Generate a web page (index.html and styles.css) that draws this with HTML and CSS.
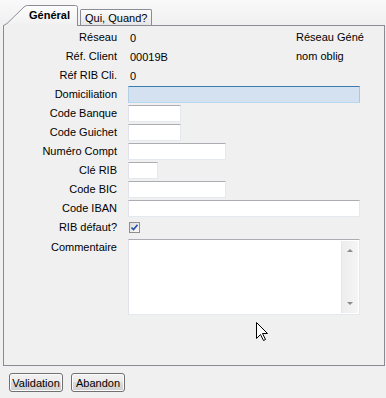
FILE: index.html
```html
<!DOCTYPE html>
<html lang="fr">

<head>
    <meta charset="UTF-8">
    <title>RIB</title>
    <link rel="stylesheet" href="styles.css">
</head>

<body>

    <div class="window">
        <div class="tabs">
            <div class="tab active">
                <svg class="tab-shape" width="75" height="21" viewBox="0 0 75 21">
                    <defs>
                        <linearGradient id="tabfill" x1="0" y1="0" x2="0" y2="1">
                            <stop offset="0" stop-color="#fdfdfd" />
                            <stop offset="1" stop-color="#f0f0f0" />
                        </linearGradient>
                    </defs>
                    <path d="M0.5 21 L0.5 20.5 L4 18.5 L21 2 Q22.5 0.5 24.5 0.5 L72.5 0.5 Q74.5 0.5 74.5 2.5 L74.5 21 Z" fill="url(#tabfill)" />
                    <path d="M0.5 21 L0.5 20.5 L4 18.5 L21 2 Q22.5 0.5 24.5 0.5 L72.5 0.5 Q74.5 0.5 74.5 2.5 L74.5 21" fill="none" stroke="#898c95" />
                </svg>
                <span>Général</span>
            </div>
            <div class="tab">Qui, Quand?</div>
        </div>

        <div class="panel">
            <div class="form">
                <div class="lbl">Réseau</div>
                <div class="fld short"><span class="val">0</span></div>
                <div class="note">Réseau Géné</div>

                <div class="lbl">Réf. Client</div>
                <div class="fld short"><span class="val">00019B</span></div>
                <div class="note">nom oblig</div>

                <div class="lbl">Réf RIB Cli.</div>
                <div class="fld"><span class="val">0</span></div>

                <div class="lbl">Domiciliation</div>
                <div class="fld"><input type="text" class="edit wide focused"></div>

                <div class="lbl">Code Banque</div>
                <div class="fld"><input type="text" class="edit w53"></div>

                <div class="lbl">Code Guichet</div>
                <div class="fld"><input type="text" class="edit w53"></div>

                <div class="lbl">Numéro Compt</div>
                <div class="fld"><input type="text" class="edit w98"></div>

                <div class="lbl">Clé RIB</div>
                <div class="fld"><input type="text" class="edit w30"></div>

                <div class="lbl">Code BIC</div>
                <div class="fld"><input type="text" class="edit w98"></div>

                <div class="lbl">Code IBAN</div>
                <div class="fld"><input type="text" class="edit wide"></div>

                <div class="lbl">RIB défaut?</div>
                <div class="fld">
                    <span class="check">
                        <svg width="7" height="7" viewBox="0 0 7 7">
                            <path d="M0.5 3.5 L2.5 5.5 L6.5 0.8" fill="none" stroke="#2a4fa8" stroke-width="1.6" />
                        </svg>
                    </span>
                </div>

                <div class="lbl top">Commentaire</div>
                <div class="fld top">
                    <div class="memo">
                        <div class="memo-text"></div>
                        <div class="scroll">
                            <span class="arrow up"></span>
                            <span class="arrow down"></span>
                        </div>
                    </div>
                </div>
            </div>
        </div>

        <div class="buttons">
            <button class="btn">Validation</button>
            <button class="btn">Abandon</button>
        </div>

        <svg class="cursor" width="13" height="20" viewBox="0 0 13 20">
            <path d="M0.5 0.5 L0.5 16.5 L4.5 12.5 L7.5 18.5 L9.5 17.5 L6.5 11.5 L11.5 11.5 Z" fill="#fff" stroke="#000" />
        </svg>
    </div>

</body>

</html>
```

FILE: styles.css
```css
body {
    margin: 0;
    background: #f0f0f0;
    font-family: "Liberation Sans", "DejaVu Sans", sans-serif;
    font-size: 11px;
    color: #000;
}

.window {
    position: relative;
    width: 386px;
    height: 398px;
    background: linear-gradient(#f9f9f9 0, #f0f0f0 25px);
}

/* ---------- onglets ---------- */
.tabs {
    display: flex;
    align-items: flex-end;
    height: 25px;
    padding-left: 3px;
    gap: 1px;
}

.tab {
    position: relative;
    box-sizing: border-box;
    height: 16px;
    margin-left: 1px;
    padding: 1px 4px 0 4px;
    border: 1px solid #898c95;
    border-bottom: none;
    border-radius: 2px 2px 0 0;
    background: linear-gradient(#fcfcfc, #e6e6e6);
    line-height: 14px;
}

.tab.active {
    width: 75px;
    height: 21px;
    margin: 0 0 -1px 0;
    padding: 3px 0 0 26px;
    border: none;
    background: none;
    font-weight: bold;
    z-index: 2;
}

.tab-shape {
    position: absolute;
    left: 0;
    top: 0;
}

.tab.active span {
    position: relative;
}

/* ---------- panneau ---------- */
.panel {
    box-sizing: border-box;
    width: 382px;
    height: 341px;
    margin-left: 3px;
    border: 1px solid #898c95;
    background: #f0f0f0;
    padding-top: 2px;
}

.form {
    display: grid;
    grid-template-columns: 124px 168px 1fr;
    grid-template-rows: repeat(11, 19px) auto;
    align-items: center;
}

.lbl {
    text-align: right;
    padding-right: 11px;
    line-height: 13px;
}

.lbl.top {
    align-self: start;
    padding-top: 4px;
}

.fld {
    grid-column: 2 / 4;
    display: flex;
    align-items: center;
}

.fld.short {
    grid-column: 2;
}

.fld.top {
    align-self: start;
    padding-top: 2px;
}

.val {
    padding-left: 2px;
}

.note {
    line-height: 13px;
}

.edit {
    box-sizing: border-box;
    height: 17px;
    margin: 0;
    padding: 0 2px;
    border: 1px solid;
    border-color: #abadb3 #e3e9ef #e3e9ef #e2e3ea;
    background: #fff;
    font: inherit;
    outline: none;
}

.edit.focused {
    background: #d3e1f1;
    border-color: #3d7bad #a4c9e3 #b7d9ed #b5cfe7;
}

.wide {
    width: 232px;
}

.w53 {
    width: 53px;
}

.w98 {
    width: 98px;
}

.w30 {
    width: 30px;
}

.check {
    box-sizing: border-box;
    display: flex;
    align-items: center;
    justify-content: center;
    width: 11px;
    height: 11px;
    margin-left: 1px;
    border: 1px solid #8e8f8f;
    background: linear-gradient(135deg, #dcdcdc, #fbfbfb);
}

/* ---------- zone commentaire ---------- */
.memo {
    box-sizing: border-box;
    display: flex;
    width: 232px;
    height: 76px;
    border: 1px solid;
    border-color: #abadb3 #e3e9ef #e3e9ef #e2e3ea;
    background: #fff;
}

.memo-text {
    flex: 1;
}

.scroll {
    position: relative;
    width: 16px;
    margin: 1px 1px 1px 0;
    background: linear-gradient(90deg, #ededed, #f5f5f5);
    border-left: 1px solid #e6e6e6;
}

.arrow {
    position: absolute;
    left: 5px;
    width: 0;
    height: 0;
    border-left: 3px solid transparent;
    border-right: 3px solid transparent;
}

.arrow.up {
    top: 8px;
    border-bottom: 3px solid #8a8a8a;
}

.arrow.down {
    bottom: 8px;
    border-top: 3px solid #8a8a8a;
}

/* ---------- boutons ---------- */
.buttons {
    display: flex;
    gap: 8px;
    padding: 7px 0 0 9px;
}

.btn {
    box-sizing: border-box;
    width: 54px;
    height: 19px;
    padding: 0;
    border: 1px solid #707070;
    border-radius: 3px;
    background: linear-gradient(#f2f2f2 0, #ebebeb 45%, #dddddd 50%, #cfcfcf 100%);
    box-shadow: inset 0 0 0 1px #fcfcfc;
    font: inherit;
    color: #000;
}

.cursor {
    position: absolute;
    left: 256px;
    top: 322px;
}
```
